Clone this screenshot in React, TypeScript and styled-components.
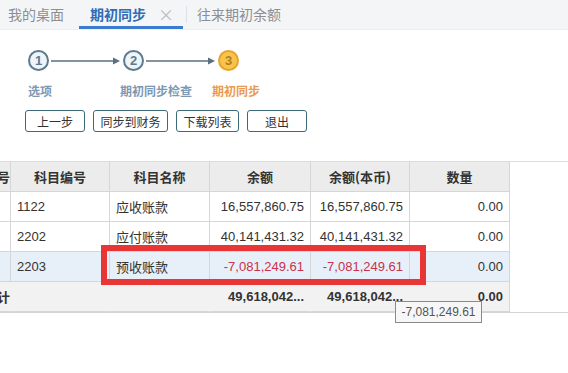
import React from "react";
import styled, { createGlobalStyle } from "styled-components";

const Global = createGlobalStyle`
  html, body { margin: 0; padding: 0; background: #fff; }
  body { font-family: "Liberation Sans", "Noto Sans CJK SC", Arial, sans-serif; color: #333; }
  * { box-sizing: border-box; }
`;

const Page = styled.div`
  position: relative;
  width: 568px;
  height: 373px;
  overflow: hidden;
  background: #fff;
`;

const TabBar = styled.div`
  height: 30px;
  background: #f4f5f7;
  border-bottom: 1px solid #eceef1;
  display: flex;
  align-items: stretch;
  padding-left: 8px;
`;

const Tab = styled.div<{ $active?: boolean; $w: number }>`
  width: ${(p) => p.$w}px;
  display: flex;
  align-items: center;
  gap: 12px;
  font-size: 14px;
  font-family: "Noto Sans CJK SC", sans-serif;
  color: ${(p) => (p.$active ? "#2f6db5" : "#8a8f96")};
  font-weight: ${(p) => (p.$active ? 700 : 400)};
  border-bottom: 3px solid ${(p) => (p.$active ? "#3b7bd0" : "transparent")};
  padding-left: ${(p) => (p.$active ? 11 : 0)}px;
  padding-top: 2px;
`;

const Close = styled.span`
  color: #b8bcc2;
  font-weight: 400;
  font-size: 16px;
`;

const Sep = styled.div`
  width: 1px;
  margin: 6px 10px 6px 3px;
  background: #dde0e4;
`;

const Steps = styled.div`
  display: flex;
  align-items: center;
  margin-top: 20px;
  padding-left: 28px;
  height: 21px;
`;

const Circle = styled.div<{ $current?: boolean }>`
  width: 21px;
  height: 21px;
  border-radius: 50%;
  display: flex;
  align-items: center;
  justify-content: center;
  font-size: 13px;
  font-weight: 700;
  border: 2px solid ${(p) => (p.$current ? "#eaa22e" : "#5d7a8e")};
  background: ${(p) => (p.$current ? "#f7c54a" : "#eef4f8")};
  color: ${(p) => (p.$current ? "#b47c22" : "#5d7a8e")};
`;

const Arrow = styled.svg`
  display: block;
  margin: 0 2px;
`;

const Labels = styled.div`
  display: grid;
  grid-template-columns: 92px 92px auto;
  padding: 11px 0 0 28px;
  height: 39px;
`;

const Label = styled.div<{ $current?: boolean }>`
  font-family: "Noto Sans CJK SC", sans-serif;
  font-size: 12px;
  line-height: 17px;
  font-weight: 700;
  color: ${(p) => (p.$current ? "#ea9a50" : "#7d98b3")};
`;

const Buttons = styled.div`
  display: flex;
  gap: 8px;
  padding-left: 25px;
  height: 22px;
`;

const Btn = styled.div<{ $w: number }>`
  width: ${(p) => p.$w}px;
  height: 22px;
  border: 1px solid #3d6a78;
  border-radius: 3px;
  display: flex;
  align-items: center;
  justify-content: center;
  font-family: "Noto Sans CJK SC", sans-serif;
  font-size: 12px;
  color: #333;
  background: #fff;
`;

const GridPanel = styled.div`
  margin-top: 29px;
  border-top: 1px solid #dcdcdc;
  border-bottom: 1px solid #d4d4d4;
  height: 152px;
`;

const Table = styled.div`
  display: grid;
  grid-template-columns: 11px 99px 100px 101px 99px 100px;
  grid-auto-rows: 30px;
  width: 510px;
`;

const Cell = styled.div<{
  $align?: "left" | "right" | "center";
  $bg?: string;
  $head?: boolean;
  $bold?: boolean;
  $neg?: boolean;
  $noLine?: boolean;
}>`
  display: flex;
  align-items: center;
  justify-content: ${(p) =>
    p.$align === "right" ? "flex-end" : p.$align === "center" ? "center" : "flex-start"};
  padding: 0 6px;
  overflow: hidden;
  white-space: nowrap;
  font-size: 13px;
  font-family: ${(p) =>
    p.$head ? '"Noto Sans CJK SC", sans-serif' : '"Liberation Sans", "Noto Sans CJK SC", sans-serif'};
  font-weight: ${(p) => (p.$head || p.$bold ? 700 : 400)};
  color: ${(p) => (p.$neg ? "#c8324c" : "#333")};
  background: ${(p) => p.$bg || "#fff"};
  border-right: 1px solid ${(p) => (p.$noLine ? "transparent" : "#d6d6d6")};
  border-bottom: 1px solid #d6d6d6;
`;

const EdgeCell = styled(Cell)`
  padding: 0;
  justify-content: flex-end;
`;

const CjkText = styled.span`
  font-family: "Noto Sans CJK SC", sans-serif;
`;

const RedBox = styled.div`
  position: absolute;
  left: 101px;
  top: 245px;
  width: 325px;
  height: 40px;
  border: 6px solid #e83535;
  pointer-events: none;
`;

const Tooltip = styled.div`
  position: absolute;
  left: 395px;
  top: 301px;
  width: 87px;
  height: 22px;
  border: 1px solid #8a8a8a;
  background: #f7f7f7;
  color: #555;
  font-size: 12px;
  display: flex;
  align-items: center;
  justify-content: center;
`;

const rows = [
  { code: "1122", name: "应收账款", amt: "16,557,860.75", local: "16,557,860.75", qty: "0.00" },
  { code: "2202", name: "应付账款", amt: "40,141,431.32", local: "40,141,431.32", qty: "0.00" },
  { code: "2203", name: "预收账款", amt: "-7,081,249.61", local: "-7,081,249.61", qty: "0.00", sel: true },
];

const ArrowLine = () => (
  <Arrow width="70" height="10" viewBox="0 0 70 10">
    <line x1="0" y1="5" x2="64" y2="5" stroke="#5a6f80" strokeWidth="1.3" />
    <path d="M62 1.5 L69 5 L62 8.5 Z" fill="#5a6f80" />
  </Arrow>
);

export default function App() {
  const head = "#ececec";
  const foot = "#f2f2f2";
  const sel = "#e7f0f9";
  return (
    <Page>
      <Global />
      <TabBar>
        <Tab $w={71}>我的桌面</Tab>
        <Tab $w={104} $active>
          期初同步<Close>×</Close>
        </Tab>
        <Sep />
        <Tab $w={100}>往来期初余额</Tab>
      </TabBar>
      <Steps>
        <Circle>1</Circle>
        <ArrowLine />
        <Circle>2</Circle>
        <ArrowLine />
        <Circle $current>3</Circle>
      </Steps>
      <Labels>
        <Label>选项</Label>
        <Label>期初同步检查</Label>
        <Label $current>期初同步</Label>
      </Labels>
      <Buttons>
        <Btn $w={60}>上一步</Btn>
        <Btn $w={75}>同步到财务</Btn>
        <Btn $w={63}>下载列表</Btn>
        <Btn $w={60}>退出</Btn>
      </Buttons>
      <GridPanel>
        <Table>
          <EdgeCell $head $bg={head}>
            <CjkText>号</CjkText>
          </EdgeCell>
          <Cell $head $bg={head} $align="center">科目编号</Cell>
          <Cell $head $bg={head} $align="center">科目名称</Cell>
          <Cell $head $bg={head} $align="center">余额</Cell>
          <Cell $head $bg={head} $align="center">余额(本币)</Cell>
          <Cell $head $bg={head} $align="center">数量</Cell>
          {rows.map((r) => {
            const bg = r.sel ? sel : "#fff";
            const neg = r.amt.startsWith("-");
            return (
              <React.Fragment key={r.code}>
                <EdgeCell $bg={bg} />
                <Cell $bg={bg}>{r.code}</Cell>
                <Cell $bg={bg}>
                  <CjkText>{r.name}</CjkText>
                </Cell>
                <Cell $bg={bg} $align="right" $neg={neg}>{r.amt}</Cell>
                <Cell $bg={bg} $align="right" $neg={neg}>{r.local}</Cell>
                <Cell $bg={bg} $align="right">{r.qty}</Cell>
              </React.Fragment>
            );
          })}
          <EdgeCell $bg={foot} $head $noLine>
            <CjkText>计</CjkText>
          </EdgeCell>
          <Cell $bg={foot} $noLine />
          <Cell $bg={foot} $noLine />
          <Cell $bg={foot} $bold $align="right" $noLine>49,618,042...</Cell>
          <Cell $bg={foot} $bold $align="right" $noLine>49,618,042...</Cell>
          <Cell $bg={foot} $bold $align="right">0.00</Cell>
        </Table>
      </GridPanel>
      <RedBox />
      <Tooltip>-7,081,249.61</Tooltip>
    </Page>
  );
}
